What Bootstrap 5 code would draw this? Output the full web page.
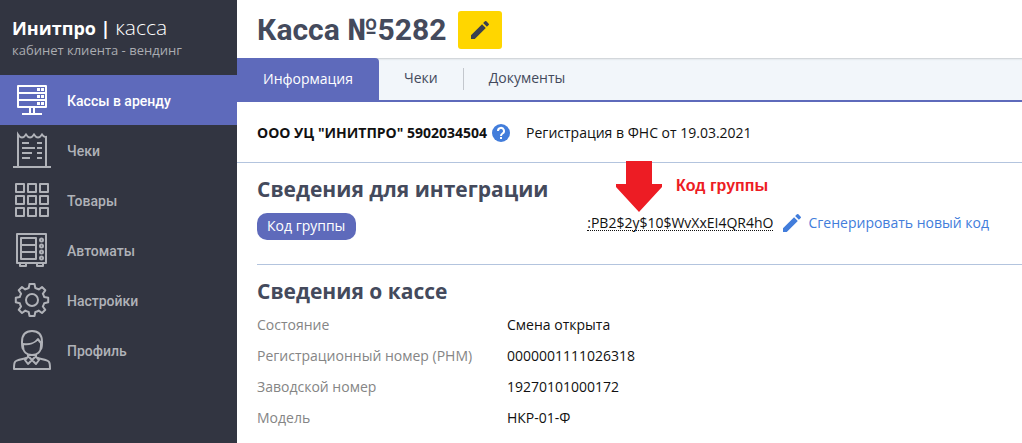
<!DOCTYPE html>
<html lang="ru">
<head>
<meta charset="utf-8">
<meta name="viewport" content="width=device-width, initial-scale=1">
<title>Касса №5282</title>
<link href="https://cdn.jsdelivr.net/npm/bootstrap@5.3.0/dist/css/bootstrap.min.css" rel="stylesheet">
<style>
  :root { --ink: #444a5c; --violet: #5e6abb; --line: #b3c4de; --blue: #427ddb; }
  body { font: 14px/20px "Open Sans", sans-serif; color: #111; background: #fff; }
  .sidebar { width: 237px; background: #323541; font-family: Roboto, sans-serif; }
  .brand { height: 75px; padding: 15px 12px 0; font-family: "Open Sans", sans-serif; color: #fff; }
  .brand-name { font-size: 18px; line-height: 24px; font-weight: 700; }
  .brand-name span { font-size: 21px; font-weight: 300; }
  .brand-sub { font-size: 13px; color: #aaacb1; }
  .side-link { height: 50px; padding-left: 12px; gap: 15px; font-weight: 500; color: #b0b2b8; text-decoration: none; }
  .side-link.active { background: var(--violet); color: #fff; }
  .side-link span { padding-top: 2px; }
  .side-link svg { width: 40px; height: 40px; flex: none; fill: none; stroke: currentColor; stroke-width: 2; }
  .page-head { height: 58px; padding: 2px 20px 0; gap: 12px; }
  .page-head h1 { font: 700 30px/40px Roboto, sans-serif; color: var(--ink); }
  .btn-edit { width: 44px; height: 38px; background: #ffd600; border-radius: 3px; }
  .btn-edit:hover { background: #f2cb00; }
  .tab-bar { height: 44px; background: #f2f6fa; border-bottom: 2px solid var(--violet); box-shadow: inset 0 3px 2px -2px #c8ccd0; }
  .tab-bar a { padding: 10px 25px; color: var(--ink); text-decoration: none; }
  .tab-bar .active { padding: 11px 26px; background: var(--violet); color: #fff; border-radius: 0 4px 0 0; }
  .tab-sep { width: 1px; height: 22px; margin-top: 10px; background: #c3c7cd; }
  .org-row { height: 61px; padding: 2px 20px 0; border-bottom: 1px solid var(--line); }
  .org-row button { line-height: 0; margin: 0 16px 0 5px; }
  .block { padding-left: 20px; }
  .block h2 { font-size: 21px; line-height: 28px; font-weight: 700; color: var(--ink); }
  .integration { padding-top: 12px; }
  .code-row { height: 62px; padding: 10px 33px 0 0; border-bottom: 1px solid var(--line); }
  .group-tag { padding: 3px 11px 4px 10px; border-radius: 10px; background: var(--violet); color: #fff; }
  .code-text { height: 18px; line-height: 20px; border-bottom: 1px dotted #111; }
  .new-code { color: var(--blue); text-decoration: none; gap: 6px; margin-left: 9px; }
  .callout-arrow { left: 379px; top: -2px; }
  .callout-note { left: 439px; top: 13px; font: 700 16px/20px "Liberation Sans", sans-serif; color: #ed1c24; }
  .details { padding-top: 12px; }
  .details h2 { margin-bottom: 10px; }
  .details th { width: 250px; font-weight: 400; color: #858585; }
  .details th, .details td { padding: 0 0 11px; }
</style>
</head>
<body>
<div class="d-flex min-vh-100">
  <aside class="sidebar flex-shrink-0">
    <div class="brand">
      <div class="brand-name">Инитпро | <span>касса</span></div>
      <div class="brand-sub">кабинет клиента - вендинг</div>
    </div>
    <nav class="d-flex flex-column">
      <a href="#" class="side-link active d-flex align-items-center">
        <svg viewBox="0 0 40 40"><path stroke-linejoin="round" d="M6 6h28v21H6zM6 13h28M6 20h28M18 27v7M22 27v7M10 34h20"/><path stroke-width="3" d="M25 9.500h3M29 9.500h3M25 16.500h3M29 16.500h3M25 23.500h3M29 23.500h3"/></svg><span>Кассы в аренду</span></a>
      <a href="#" class="side-link d-flex align-items-center">
        <svg viewBox="0 0 40 40"><path d="M1 37h38M6 37V4.500q2 3 4 3t4-3q2 3 4 3t4-3q2 3 4 3t4-3q2 3 4 2.500V37M10 13h7M25 13h5M10 18h13M25 18h5M10 23h10M25 23h5M10 28h8M25 28h5"/></svg><span>Чеки</span></a>
      <a href="#" class="side-link d-flex align-items-center">
        <svg viewBox="0 0 40 40"><path stroke-linejoin="round" d="M4 4h8v8H4zM16 4h8v8h-8zM28 4h8v8h-8zM4 16h8v8H4zM16 16h8v8h-8zM28 16h8v8h-8zM4 28h8v8H4zM16 28h8v8h-8zM28 28h8v8h-8z"/></svg><span>Товары</span></a>
      <a href="#" class="side-link d-flex align-items-center">
        <svg viewBox="0 0 40 40"><path stroke-linejoin="round" d="M5 4h29v29H5zM9 8h15v21H9zM9 15h15M9 22h15M8 33v3h6v-3M25 33v3h6v-3"/><circle cx="29.500" cy="10" r="1.500"/><circle cx="29.500" cy="16" r="1.500"/><circle cx="29.500" cy="22" r="1.500"/><circle cx="29.500" cy="28" r="1.500"/></svg><span>Автоматы</span></a>
      <a href="#" class="side-link d-flex align-items-center">
        <svg viewBox="0 0 40 40"><path stroke-linejoin="round" d="M17.500 4h5l.8 4q2 .6 3.500 1.500L30 7l3.300 3.300-2.500 3.500q1 1.500 1.400 3.200l4 .8v4.500l-4 .9q-.5 1.800-1.400 3.300l2.500 3.300L30 33l-3.300-2.400q-1.600 1-3.400 1.400l-.8 4h-5l-.8-4q-1.800-.5-3.400-1.400L10 33l-3.300-3.200 2.400-3.300q-.9-1.500-1.300-3.300l-4-.9v-4.500l4-.8q.4-1.700 1.300-3.200l-2.400-3.500L10 7l3.200 2.500Q14.700 8.600 16.700 8z"/><circle cx="20" cy="20" r="6"/></svg><span>Настройки</span></a>
      <a href="#" class="side-link d-flex align-items-center">
        <svg viewBox="0 0 40 40"><path stroke-linejoin="round" d="M11 19c-1-1-1-4-1-7C10 5 13 1 20 1s10 4 10 11c0 3 0 6-1 7M11 14c6 1 12-1 15-5 1 2 2 3 3 4v3c0 6-4 9-9 9s-9-3-9-9zM16 24v3c-1 2-12 2-13 5-1 1-1 4-1 7h36c0-3 0-6-1-7-1-3-12-3-13-5v-3M16 27l-3 3 3 4 4-4 4 4 3-4-3-3M17 27l3 3 3-3"/></svg><span>Профиль</span></a>
    </nav>
  </aside>

  <main class="flex-grow-1">
    <header class="page-head d-flex align-items-center">
      <h1 class="m-0">Касса №5282</h1>
      <button type="button" class="btn-edit border-0 p-0" aria-label="Изменить">
        <svg width="24" height="24" viewBox="0 0 24 24" fill="#3a3f50"><path d="M3 17.250V21h3.750L17.810 9.940l-3.750-3.750zM20.710 7.040a1 1 0 0 0 0-1.410l-2.340-2.340a1 1 0 0 0-1.410 0l-1.830 1.830 3.750 3.750z"/></svg>
      </button>
    </header>
    <nav class="tab-bar d-flex">
      <a href="#" class="active">Информация</a>
      <a href="#">Чеки</a>
      <span class="tab-sep"></span>
      <a href="#">Документы</a>
    </nav>
    <div class="org-row d-flex align-items-center">
      <strong>ООО УЦ "ИНИТПРО" 5902034504</strong>
      <button type="button" class="border-0 bg-transparent p-0" aria-label="Справка">
        <svg width="18" height="18" viewBox="0 0 18 18"><circle cx="9" cy="9" r="9" fill="#427ddb"/><path d="M6 7a3 3 0 1 1 4.500 2.500C9.300 10.300 9 10.700 9 12" fill="none" stroke="#fff" stroke-width="2"/><path d="M8 13h2v2H8z" fill="#fff"/></svg>
      </button>
      <span>Регистрация в ФНС от 19.03.2021</span>
    </div>

    <section class="block integration position-relative">
      <h2 class="m-0">Сведения для интеграции</h2>
      <div class="code-row d-flex align-items-start">
        <span class="group-tag">Код группы</span>
        <span class="code-text ms-auto">:PB2$2y$10$WvXxEI4QR4hO</span>
        <a href="#" class="new-code d-flex align-items-center">
          <svg width="20" height="20" viewBox="2 2 20 20" fill="currentColor"><path d="M3 17.250V21h3.750L17.810 9.940l-3.750-3.750zM20.710 7.040a1 1 0 0 0 0-1.410l-2.340-2.340a1 1 0 0 0-1.410 0l-1.830 1.830 3.750 3.750z"/></svg>
          Сгенерировать новый код</a>
      </div>
      <svg class="callout-arrow position-absolute" width="46" height="51" viewBox="0 0 46 51" fill="#ed1c24"><path d="M10 0h26v23h10v3L23 51 0 26v-3h10z"/></svg>
      <span class="callout-note position-absolute">Код группы</span>
    </section>

    <section class="block details">
      <h2>Сведения о кассе</h2>
      <table>
        <tbody>
          <tr><th scope="row">Состояние</th><td>Смена открыта</td></tr>
          <tr><th scope="row">Регистрационный номер (РНМ)</th><td>0000001111026318</td></tr>
          <tr><th scope="row">Заводской номер</th><td>19270101000172</td></tr>
          <tr><th scope="row">Модель</th><td>НКР-01-Ф</td></tr>
        </tbody>
      </table>
    </section>
  </main>
</div>
<script src="https://cdn.jsdelivr.net/npm/bootstrap@5.3.0/dist/js/bootstrap.bundle.min.js"></script>
</body>
</html>
